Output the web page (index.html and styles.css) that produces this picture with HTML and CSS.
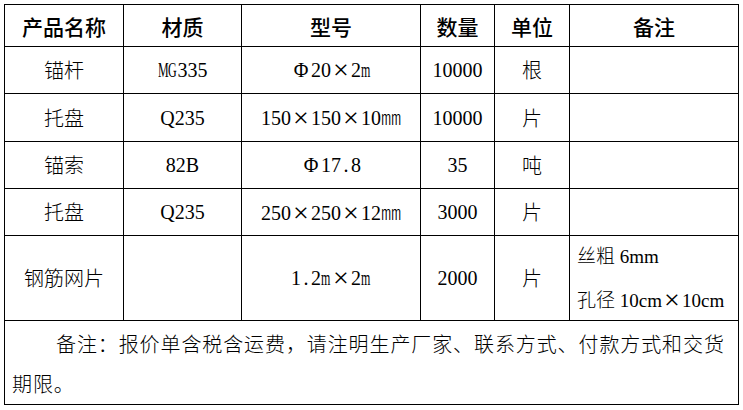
FILE: index.html
```html
<!DOCTYPE html>
<html lang="zh-CN">
<head>
<meta charset="utf-8">
<title>报价单</title>
<link rel="stylesheet" href="styles.css">
</head>
<body>
<div class="page">
<table class="quote">
<colgroup>
<col class="c1"><col class="c2"><col class="c3"><col class="c4"><col class="c5"><col class="c6">
</colgroup>
<thead>
<tr class="r-head"><th>产品名称</th><th>材质</th><th>型号</th><th>数量</th><th>单位</th><th>备注</th></tr>
</thead>
<tbody>
<tr class="r47"><td class="cjk">锚杆</td><td><span class="n">M</span><span class="n">G</span>335</td><td><span class="f">Φ</span>20<span class="x">×</span>2<span class="n">m</span></td><td>10000</td><td class="cjk">根</td><td></td></tr>
<tr class="r48"><td class="cjk">托盘</td><td>Q235</td><td>150<span class="x">×</span>150<span class="x">×</span>10<span class="mm">㎜</span></td><td>10000</td><td class="cjk">片</td><td></td></tr>
<tr class="r47"><td class="cjk">锚索</td><td>82B</td><td><span class="f">Φ</span>17<span class="h">.</span>8</td><td>35</td><td class="cjk">吨</td><td></td></tr>
<tr class="r47"><td class="cjk">托盘</td><td>Q235</td><td>250<span class="x">×</span>250<span class="x">×</span>12<span class="mm">㎜</span></td><td>3000</td><td class="cjk">片</td><td></td></tr>
<tr class="r84"><td class="cjk">钢筋网片</td><td></td><td>1<span class="h">.</span>2<span class="n">m</span><span class="x">×</span>2<span class="n">m</span></td><td>2000</td><td class="cjk">片</td><td class="spec"><div class="spec-line">丝粗 6mm</div><div class="spec-line">孔径 10cm<span class="x">×</span>10cm</div></td></tr>
<tr class="r84"><td colspan="6" class="note">备注：报价单含税含运费，请注明生产厂家、联系方式、付款方式和交货<br>期限。</td></tr>
</tbody>
</table>
</div>
</body>
</html>
```
FILE: styles.css
```css
body {
  margin: 0;
  background: #fff;
}
.page {
  padding: 4px;
}
.quote {
  border-collapse: collapse;
  table-layout: fixed;
  width: 734px;
  font-family: "Liberation Serif", "Noto Sans CJK SC", serif;
  font-weight: 300;
  font-size: 20px;
  color: #000;
}
.c1 { width: 119px; }
.c2 { width: 118px; }
.c3 { width: 179px; }
.c4 { width: 74px; }
.c5 { width: 75px; }
.c6 { width: 169px; }
.quote th,
.quote td {
  border: 1px solid #000;
  padding: 0;
  text-align: center;
  vertical-align: middle;
  white-space: nowrap;
  line-height: 24px;
  box-sizing: border-box;
}
.quote th {
  font-family: "Noto Sans CJK SC", sans-serif;
  font-weight: 500;
  font-size: 21px;
}
.r-head th { height: 42px; }
.r47 td { height: 47px; }
.r48 td { height: 48px; }
.r84 td { height: 84px; }
.cjk {
  font-family: "Noto Sans CJK SC", sans-serif;
  font-weight: 300;
}
.n {
  display: inline-block;
  width: 0.5em;
  transform: scaleX(0.6);
  transform-origin: left center;
  text-align: left;
}
.h {
  display: inline-block;
  width: 0.5em;
  text-align: center;
}
.f {
  display: inline-block;
  width: 20px;
  text-align: center;
}
.x {
  display: inline-block;
  width: 20px;
  font-size: 28px;
  line-height: 20px;
  text-align: center;
  vertical-align: -2px;
}
.mm {
  font-family: "Noto Sans CJK SC", sans-serif;
}
.quote td.spec {
  text-align: left;
  padding: 2px 0 0 7px;
  font-size: 19px;
}
.spec-line {
  line-height: 38px;
}
.spec-line + .spec-line {
  margin-top: 6px;
}
.quote td.note {
  text-align: left;
  white-space: nowrap;
  padding: 2px 4px 0 7px;
  text-indent: 44px;
  line-height: 40px;
  letter-spacing: 0.9px;
  font-family: "Noto Sans CJK SC", sans-serif;
  font-weight: 300;
}
```
